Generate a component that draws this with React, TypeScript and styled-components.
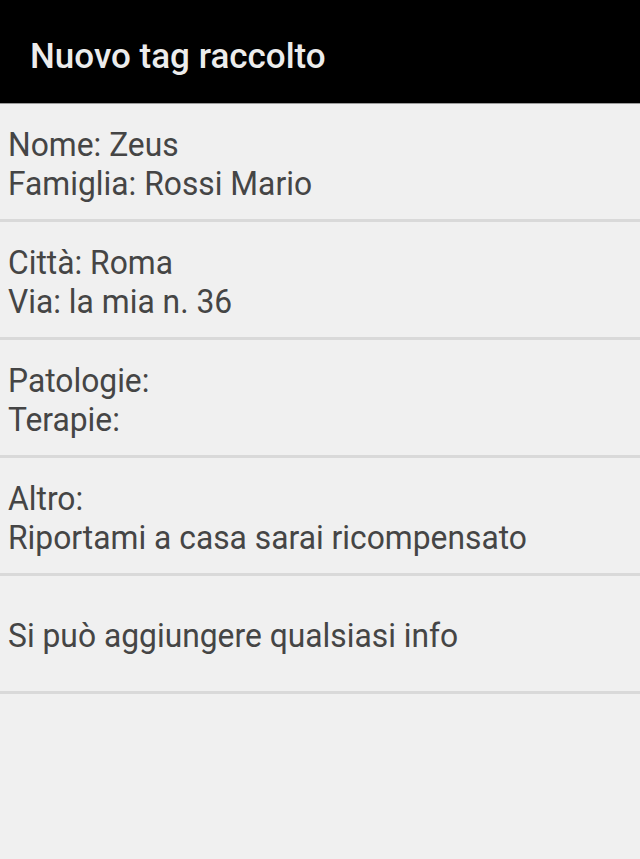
import React from "react";
import styled, { createGlobalStyle } from "styled-components";

const Global = createGlobalStyle`
  html, body { margin: 0; padding: 0; background: #f0f0f0; }
  body { font-family: Roboto, "Noto Sans", sans-serif; }
`;

const Page = styled.div`
  min-height: 859px;
  background: #f0f0f0;
  display: flex;
  flex-direction: column;
`;

const Toolbar = styled.header`
  height: 104px;
  background: #000;
  display: flex;
  align-items: center;
  padding-left: 30px;
  padding-top: 10px;
  box-sizing: border-box;
  border-bottom: 1px solid #9a9a9a;
`;

const Title = styled.h1`
  margin: 0;
  font-family: Roboto, sans-serif;
  font-weight: 500;
  font-size: 35px;
  color: #ececec;
  letter-spacing: 0;
`;

const Section = styled.section`
  height: 111px;
  padding: 4px 8px 0;
  display: flex;
  flex-direction: column;
  justify-content: center;
  border-bottom: 3px solid #d9d9d9;
  box-sizing: content-box;
`;

const Line = styled.div`
  font-size: 31.8px;
  line-height: 38.5px;
  color: #454545;
  white-space: nowrap;
  transform: scaleY(1.06);
  transform-origin: left center;
`;

const sections: string[][] = [
  ["Nome: Zeus", "Famiglia: Rossi Mario"],
  ["Città: Roma", "Via: la mia n. 36"],
  ["Patologie:", "Terapie:"],
  ["Altro:", "Riportami a casa sarai ricompensato"],
  ["Si può aggiungere qualsiasi info"],
];

export default function App() {
  return (
    <Page>
      <Global />
      <Toolbar>
        <Title>Nuovo tag raccolto</Title>
      </Toolbar>
      {sections.map((lines, i) => (
        <Section key={i}>
          {lines.map((l) => (
            <Line key={l}>{l}</Line>
          ))}
        </Section>
      ))}
    </Page>
  );
}
